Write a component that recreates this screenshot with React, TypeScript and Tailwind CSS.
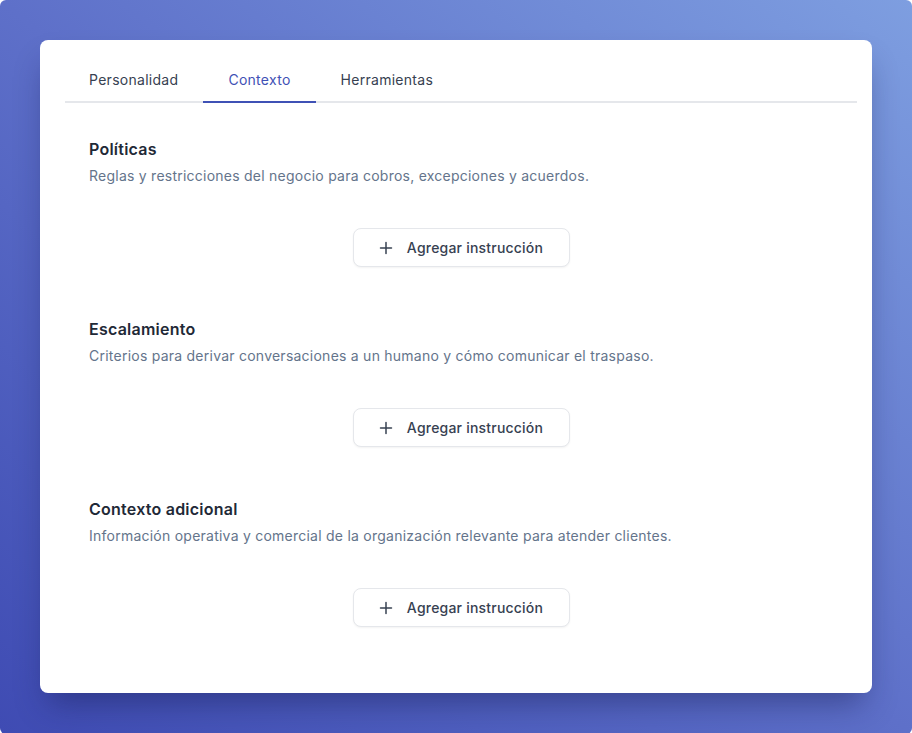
import React, { useState } from "react";

const tabs = ["Personalidad", "Contexto", "Herramientas"];

const sections = [
  {
    title: "Políticas",
    description:
      "Reglas y restricciones del negocio para cobros, excepciones y acuerdos.",
  },
  {
    title: "Escalamiento",
    description:
      "Criterios para derivar conversaciones a un humano y cómo comunicar el traspaso.",
  },
  {
    title: "Contexto adicional",
    description:
      "Información operativa y comercial de la organización relevante para atender clientes.",
  },
];

function PlusIcon() {
  return (
    <svg
      width="14"
      height="14"
      viewBox="0 0 14 14"
      fill="none"
      stroke="currentColor"
      strokeWidth="1.5"
      strokeLinecap="round"
    >
      <path d="M7 1.5v11M1.5 7h11" />
    </svg>
  );
}

export default function App() {
  const [active, setActive] = useState("Contexto");

  return (
    <div className="min-h-[733px] w-full bg-white font-['Inter',sans-serif] tracking-[0.015em]">
      <div className="min-h-[733px] w-full rounded-[6px] bg-linear-to-tr from-[#3f4bb3] via-[#5e70c9] to-[#7e9ee0] px-10 pb-[41px] pt-10">
        <div className="rounded-lg bg-white pb-[66px] pl-[25px] pr-[15px] pt-[17px] shadow-[0_18px_30px_-8px_rgba(20,25,80,0.45)]">
          <div className="flex border-b-2 border-[#e5e7eb]">
            {tabs.map((t, i) => {
              const isActive = t === active;
              const pad = i === 0 ? "pl-6 pr-[25px]" : "px-[25px]";
              return (
                <button
                  key={t}
                  onClick={() => setActive(t)}
                  className={
                    isActive
                      ? `${pad} -mb-[2px] border-b-2 border-[#3f51b5] pb-[11px] pt-[13px] text-sm leading-5 tracking-[0.02em] text-[#3f51b5]`
                      : `${pad} -mb-[2px] border-b-2 border-transparent pb-[11px] pt-[13px] text-sm leading-5 tracking-[0.02em] text-[#374151]`
                  }
                >
                  {t}
                </button>
              );
            })}
          </div>

          <div className="flex flex-col gap-[50px] px-6 pt-[34px]">
            {sections.map((s) => (
              <section key={s.title}>
                <h3 className="text-base font-semibold leading-6 text-[#1f2937]">
                  {s.title}
                </h3>
                <p className="mt-[5px] text-sm leading-5 text-[#64748b]">
                  {s.description}
                </p>
                <div className="mt-[42px] flex justify-center">
                  <button className="flex h-[39px] w-[217px] items-center justify-center gap-[14px] rounded-lg border border-[#e5e7eb] bg-white text-sm font-medium tracking-[0.015em] text-[#374151] shadow-[0_1px_2px_rgba(0,0,0,0.05)]">
                    <PlusIcon />
                    <span>Agregar instrucción</span>
                  </button>
                </div>
              </section>
            ))}
          </div>
        </div>
      </div>
    </div>
  );
}
